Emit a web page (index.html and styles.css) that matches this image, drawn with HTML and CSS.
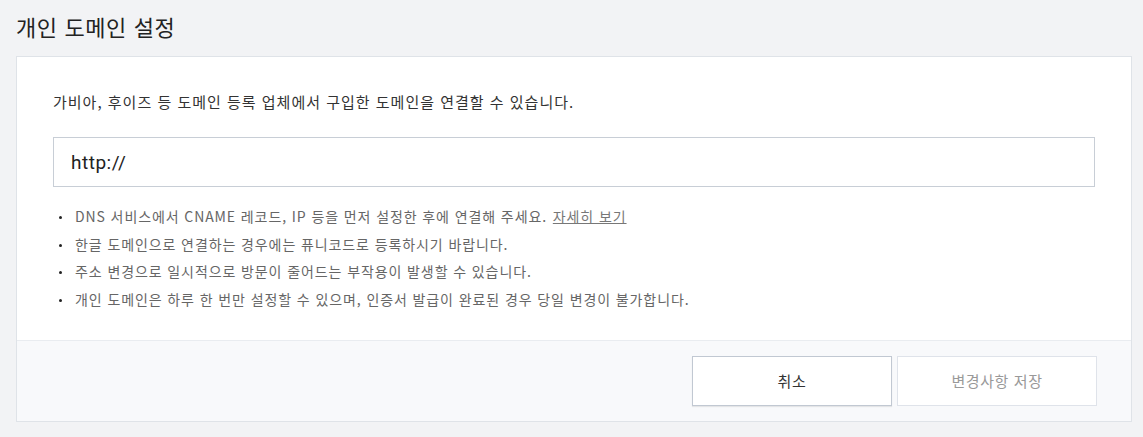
FILE: index.html
```html
<!DOCTYPE html>
<html lang="ko">
<head>
<meta charset="UTF-8" />
<meta name="viewport" content="width=device-width, initial-scale=1" />
<title>개인 도메인 설정</title>
<link rel="stylesheet" href="styles.css">
</head>
<body>

<h1>개인 도메인 설정</h1>

<div class="card">
  <div class="card-body">
    <p class="desc">가비아, 후이즈 등 도메인 등록 업체에서 구입한 도메인을 연결할 수 있습니다.</p>
    <input class="domain-input" type="text" value="http://" />
    <ul class="notes">
      <li>DNS 서비스에서 CNAME 레코드, IP 등을 먼저 설정한 후에 연결해 주세요. <a href="#">자세히 보기</a></li>
      <li>한글 도메인으로 연결하는 경우에는 퓨니코드로 등록하시기 바랍니다.</li>
      <li>주소 변경으로 일시적으로 방문이 줄어드는 부작용이 발생할 수 있습니다.</li>
      <li>개인 도메인은 하루 한 번만 설정할 수 있으며, 인증서 발급이 완료된 경우 당일 변경이 불가합니다.</li>
    </ul>
  </div>
  <div class="card-footer">
    <button class="btn">취소</button>
    <button class="btn" disabled>변경사항 저장</button>
  </div>
</div>

</body>
</html>
```

FILE: styles.css
```css
body {
  margin: 0;
  padding: 0 11px 16px 16px;
  background: #f2f3f5;
  font-family: "Noto Sans CJK KR", sans-serif;
  color: #333;
}
h1 {
  margin: 0;
  padding: 10px 0 14px;
  font-size: 22px;
  font-weight: 400;
  line-height: 32px;
  letter-spacing: 0.6px;
  color: #222;
}
.card {
  background: #fff;
  border: 1px solid #dfe3e8;
}
.card-body {
  padding: 32px 36px 26px;
}
.desc {
  margin: 0 0 22px;
  font-size: 15px;
  line-height: 26px;
  letter-spacing: 1px;
  color: #333;
}
.domain-input {
  display: block;
  box-sizing: border-box;
  width: 100%;
  height: 50px;
  padding: 0 17px;
  border: 1px solid #c8ced6;
  font-family: Roboto, "Noto Sans CJK KR", sans-serif;
  font-size: 19px;
  letter-spacing: 0.5px;
  color: #222;
  outline: none;
}
.notes {
  margin: 16px 0 0;
  padding: 0 0 0 6px;
  list-style: none;
}
.notes li {
  position: relative;
  padding-left: 16px;
  font-size: 14px;
  line-height: 27.7px;
  letter-spacing: 0.9px;
  color: #666;
}
.notes li::before {
  content: "";
  position: absolute;
  left: 0;
  top: 13px;
  width: 3px;
  height: 3px;
  border-radius: 50%;
  background: #222;
}
.notes a {
  margin-left: 1px;
  color: #777;
  text-decoration: underline;
}
.card-footer {
  display: flex;
  justify-content: flex-end;
  gap: 5px;
  padding: 15px 34px 15px;
  background: #f8f9fb;
  border-top: 1px solid #e9ecf0;
}
.btn {
  width: 200px;
  height: 50px;
  background: #fff;
  border: 1px solid #c1c8d2;
  box-shadow: 0 1px 1px rgba(0, 0, 0, 0.08);
  font-family: "Noto Sans CJK KR", sans-serif;
  font-size: 15px;
  letter-spacing: 0.6px;
  color: #333;
  cursor: pointer;
}
.btn:disabled {
  border-color: #dfe3ea;
  box-shadow: none;
  color: #999;
  cursor: default;
}
```
